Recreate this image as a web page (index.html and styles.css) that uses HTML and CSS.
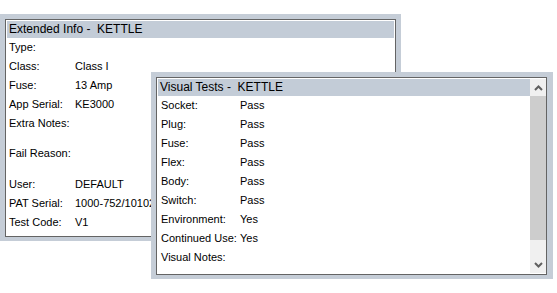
FILE: index.html
```html
<!DOCTYPE html>
<html>
<head>
<meta charset="utf-8">
<link rel="stylesheet" href="styles.css">
</head>
<body>
<div class="win win-ext">
  <div class="frame">
    <div class="pane">
      <div class="title">Extended Info -&nbsp; KETTLE</div>
      <div class="rows ext">
        <div class="row"><span class="lbl">Type:</span><span class="val"></span></div>
        <div class="row"><span class="lbl">Class:</span><span class="val">Class I</span></div>
        <div class="row"><span class="lbl">Fuse:</span><span class="val">13 Amp</span></div>
        <div class="row"><span class="lbl">App Serial:</span><span class="val">KE3000</span></div>
        <div class="row tall"><span class="lbl">Extra Notes:</span><span class="val"></span></div>
        <div class="row tall2"><span class="lbl">Fail Reason:</span><span class="val"></span></div>
        <div class="row"><span class="lbl">User:</span><span class="val">DEFAULT</span></div>
        <div class="row"><span class="lbl">PAT Serial:</span><span class="val clip">1000-752/1010200117</span></div>
        <div class="row"><span class="lbl">Test Code:</span><span class="val">V1</span></div>
      </div>
    </div>
  </div>
</div>

<div class="win win-vis">
  <div class="frame">
    <div class="pane">
      <div class="title">Visual Tests -&nbsp; KETTLE</div>
      <div class="rows vis">
        <div class="row"><span class="lbl">Socket:</span><span class="val">Pass</span></div>
        <div class="row"><span class="lbl">Plug:</span><span class="val">Pass</span></div>
        <div class="row"><span class="lbl">Fuse:</span><span class="val">Pass</span></div>
        <div class="row"><span class="lbl">Flex:</span><span class="val">Pass</span></div>
        <div class="row"><span class="lbl">Body:</span><span class="val">Pass</span></div>
        <div class="row"><span class="lbl">Switch:</span><span class="val">Pass</span></div>
        <div class="row"><span class="lbl">Environment:</span><span class="val">Yes</span></div>
        <div class="row"><span class="lbl">Continued Use:</span><span class="val">Yes</span></div>
        <div class="row"><span class="lbl">Visual Notes:</span><span class="val"></span></div>
      </div>
    </div>
    <div class="scrollbar">
      <div class="sbtn">
        <svg width="9" height="6" viewBox="0 0 9 6"><path d="M1 5 L4.5 1.5 L8 5" fill="none" stroke="#606060" stroke-width="2"/></svg>
      </div>
      <div class="thumb"></div>
      <div class="track"></div>
      <div class="sbtn">
        <svg width="9" height="6" viewBox="0 0 9 6"><path d="M1 1 L4.5 4.5 L8 1" fill="none" stroke="#606060" stroke-width="2"/></svg>
      </div>
    </div>
  </div>
</div>
</body>
</html>
```

FILE: styles.css
```css
html, body {
  margin: 0;
  padding: 0;
  background: #ffffff;
}
body {
  position: relative;
  width: 557px;
  height: 293px;
  overflow: hidden;
  font-family: "Liberation Sans", Arial, sans-serif;
  color: #000;
}
.win {
  position: absolute;
  background: #c5cdd7;
  padding: 5px 5px 4px 5px;
  box-sizing: border-box;
}
.win-ext {
  left: 0;
  top: 14px;
  width: 401px;
  height: 227px;
}
.win-vis {
  left: 151px;
  top: 72px;
  width: 402px;
  height: 207px;
  padding: 5px 6px 4px 5px;
}
.frame {
  display: flex;
  height: 100%;
  box-sizing: border-box;
  border: 1px solid #646464;
  background: #ffffff;
  padding: 1px;
}
.pane {
  flex: 1;
  min-width: 0;
  display: flex;
  flex-direction: column;
  overflow: hidden;
}
.title {
  height: 17px;
  line-height: 17px;
  background: #c3ccd7;
  font-size: 12px;
  padding-left: 2px;
  white-space: nowrap;
  flex: none;
}
.rows {
  display: flex;
  flex-direction: column;
  font-size: 11px;
}
.row {
  display: flex;
  height: 19px;
  line-height: 19px;
  white-space: nowrap;
}
.row.tall {
  height: 30px;
}
.row.tall2 {
  height: 31px;
}
.lbl {
  flex: none;
  padding-left: 2px;
}
.ext .lbl {
  width: 66px;
}
.vis .lbl {
  width: 79px;
  padding-left: 3px;
}
.val.clip {
  width: 77px;
  overflow: hidden;
}
.scrollbar {
  width: 16px;
  flex: none;
  display: flex;
  flex-direction: column;
  margin-right: -1px;
}
.sbtn {
  height: 17px;
  background: #f0f0f0;
  display: flex;
  align-items: center;
  justify-content: center;
  flex: none;
}
.sbtn svg {
  display: block;
}
.thumb {
  height: 144px;
  background: #cdcdcd;
  flex: none;
}
.track {
  flex: 1;
  background: #f0f0f0;
}
```
